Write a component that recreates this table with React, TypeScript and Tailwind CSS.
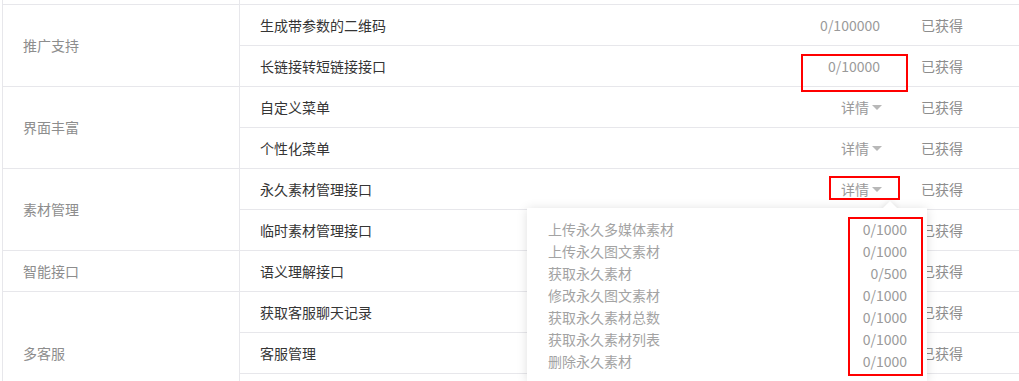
import React from "react";

type Row = { name: string; value?: string; detail?: boolean };
type Group = { label: string; rows: Row[] };

const groups: Group[] = [
  {
    label: "推广支持",
    rows: [
      { name: "生成带参数的二维码", value: "0/100000" },
      { name: "长链接转短链接接口", value: "0/10000" },
    ],
  },
  {
    label: "界面丰富",
    rows: [
      { name: "自定义菜单", detail: true },
      { name: "个性化菜单", detail: true },
    ],
  },
  {
    label: "素材管理",
    rows: [
      { name: "永久素材管理接口", detail: true },
      { name: "临时素材管理接口", detail: true },
    ],
  },
  {
    label: "智能接口",
    rows: [{ name: "语义理解接口", value: "0/1000" }],
  },
  {
    label: "多客服",
    rows: [
      { name: "获取客服聊天记录", value: "0/5000" },
      { name: "客服管理", detail: true },
      { name: "会话控制", detail: true },
    ],
  },
];

const popupItems = [
  ["上传永久多媒体素材", "0/1000"],
  ["上传永久图文素材", "0/1000"],
  ["获取永久素材", "0/500"],
  ["修改永久图文素材", "0/1000"],
  ["获取永久素材总数", "0/1000"],
  ["获取永久素材列表", "0/1000"],
  ["删除永久素材", "0/1000"],
];

const font = { fontFamily: '"Noto Sans CJK SC", "Noto Sans", sans-serif' };

function Caret() {
  return (
    <span className="ml-[3px] inline-block h-0 w-0 border-x-[5px] border-t-[5px] border-x-transparent border-t-[#b8b8b8]" />
  );
}

export default function App() {
  return (
    <div
      className="relative h-[381px] w-[1019px] overflow-hidden bg-white text-[14px]"
      style={font}
    >
      <div className="ml-[2px] border-l border-[#e7e7eb]">
        <div className="flex h-[4px]">
          <div className="w-[237px] border-r border-[#e7e7eb]" />
          <div className="flex-1" />
        </div>
        {groups.map((g) => (
          <div key={g.label} className="flex border-t border-[#e7e7eb]">
            <div className="flex w-[237px] shrink-0 items-center border-r border-[#e7e7eb] pl-[20px] text-[#8d8d8d]">
              {g.label}
            </div>
            <div className="flex-1 divide-y divide-[#e7e7eb]">
              {g.rows.map((r) => (
                <div key={r.name} className="box-content flex h-[40px] items-center">
                  <div className="flex-1 pl-[20px] text-[#353535]">{r.name}</div>
                  <div className="text-right text-[#9a9a9a]">
                    {r.detail ? (
                      <span className="-mr-[2px] inline-flex items-center">
                        详情
                        <Caret />
                      </span>
                    ) : (
                      r.value
                    )}
                  </div>
                  <div className="w-[139px] shrink-0 pl-[41px] text-[#8d8d8d]">已获得</div>
                </div>
              ))}
            </div>
          </div>
        ))}
      </div>

      {/* popup */}
      <div className="absolute left-[527px] top-[208px] w-[400px] shadow-[0_1px_10px_rgba(0,0,0,0.13)]">
        <div className="absolute -top-[5px] left-[358px] h-[10px] w-[10px] rotate-45 bg-white shadow-[0_0_6px_rgba(0,0,0,0.12)]" />
        <div className="relative bg-white pb-[10px] pl-[21px] pr-[20px] pt-[10px]">
          {popupItems.map(([n, v]) => (
            <div key={n} className="flex justify-between leading-[22px]">
              <span className="text-[#a3a3a3]">{n}</span>
              <span className="text-[#9a9a9a]">{v}</span>
            </div>
          ))}
        </div>
      </div>

      {/* red highlight boxes */}
      <div className="absolute left-[801px] top-[54px] h-[38px] w-[107px] border-2 border-[#f00]" />
      <div className="absolute left-[829px] top-[176px] h-[24px] w-[71px] border-2 border-[#f00]" />
      <div className="absolute left-[848px] top-[217px] h-[159px] w-[75px] border-2 border-[#f00]" />
    </div>
  );
}
